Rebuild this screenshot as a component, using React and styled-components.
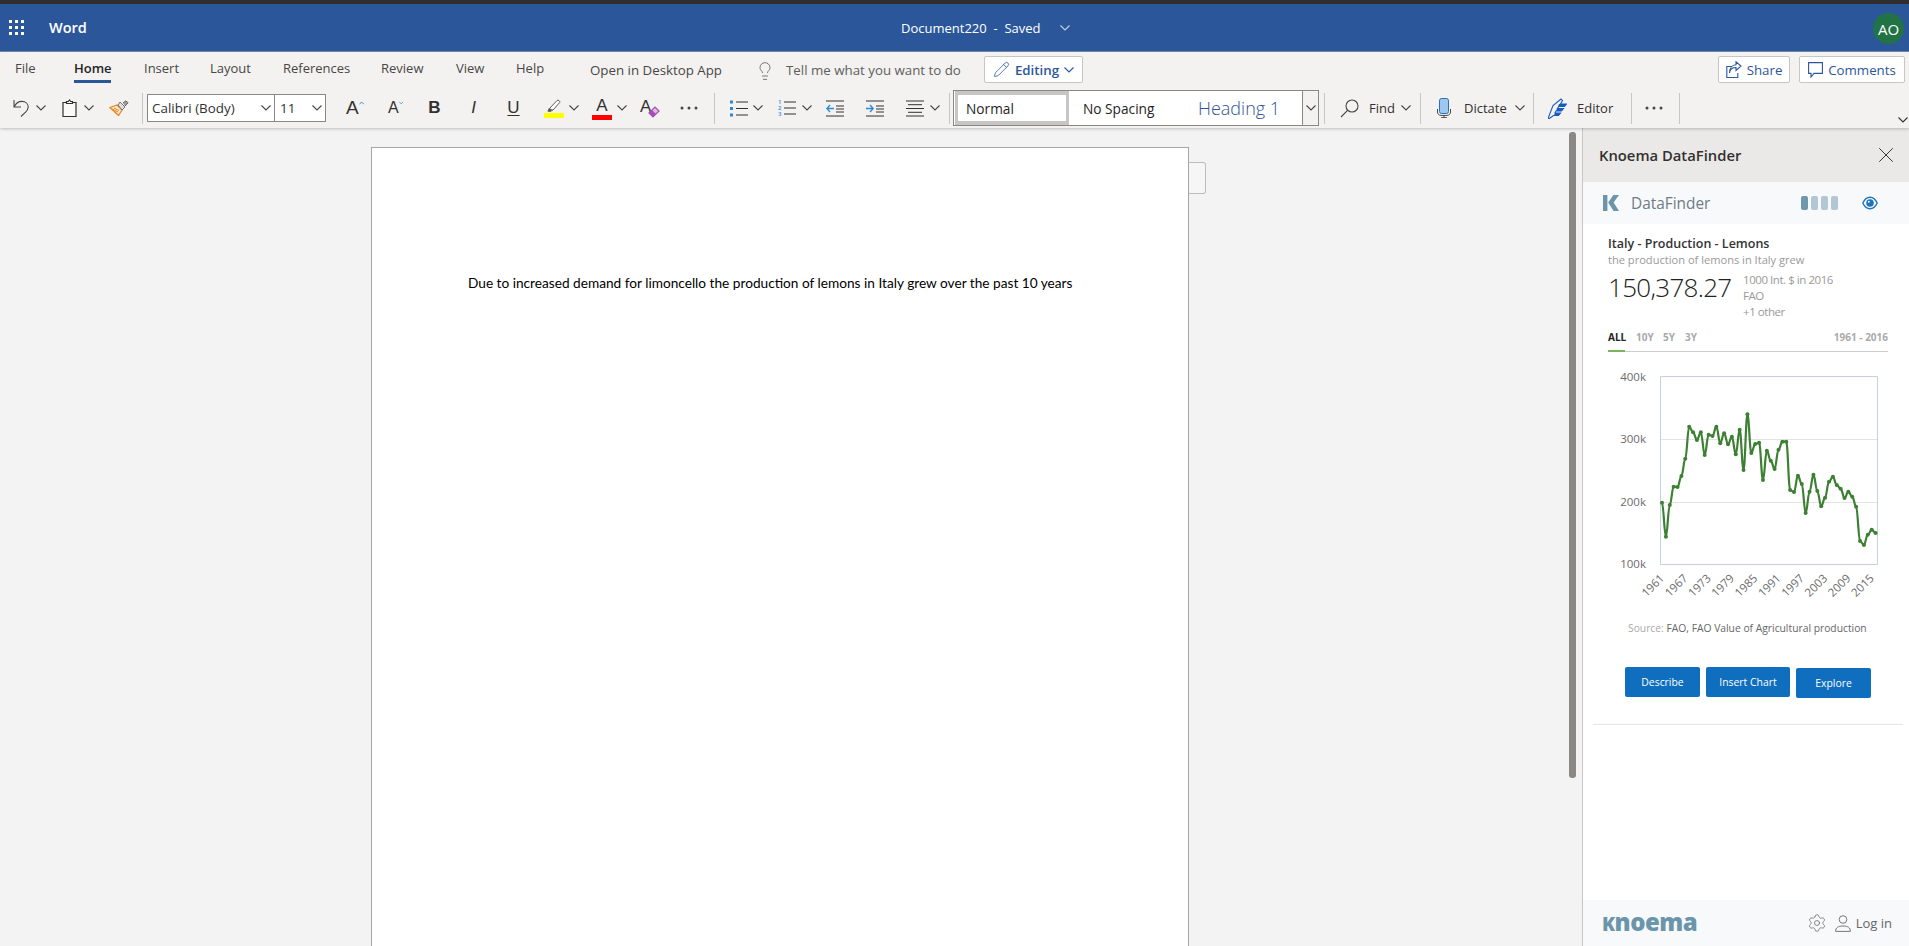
import React from 'react';
import styled, { createGlobalStyle } from 'styled-components';
import { Lightbulb, Pencil, Settings, X } from 'lucide-react';

const UI_FONT = '"Open Sans", "Noto Sans", sans-serif';

const GlobalStyle = createGlobalStyle`
  html, body {
    margin: 0;
    padding: 0;
    background: #f3f3f3;
    font-family: ${UI_FONT};
  }
  * {
    box-sizing: border-box;
  }
`;

const Root = styled.div`
  width: 1909px;
  height: 946px;
  overflow: hidden;
  display: flex;
  flex-direction: column;
`;

const TitleBar = styled.header`
  height: 52px;
  flex: none;
  display: flex;
  align-items: center;
  background: #2b579a;
  border-top: 4px solid #2e2e2e;
  border-bottom: 1px solid #6f8cb8;
  color: #fff;
`;

const Waffle = styled.svg`
  width: 16px;
  height: 16px;
  margin-left: 9px;
  flex: none;
`;

const AppName = styled.div`
  width: 852px;
  margin-left: 24px;
  font-size: 14.5px;
  font-weight: 600;
`;

const DocName = styled.div`
  font-size: 13px;
  white-space: pre;
`;

const DocChevron = styled.span`
  display: inline-flex;
  margin-left: 20px;
`;

const Avatar = styled.div`
  width: 31px;
  height: 31px;
  margin: 2px 5px 0 auto;
  border-radius: 50%;
  background: #217346;
  display: flex;
  align-items: center;
  justify-content: center;
  font-size: 15px;
`;

const Ribbon = styled.div`
  height: 76px;
  flex: none;
  position: relative;
  z-index: 2;
  background: #f3f2f1;
  box-shadow: 0 1px 3px rgba(0, 0, 0, 0.22);
`;

const TabRow = styled.div`
  height: 40px;
  display: flex;
  align-items: flex-start;
  padding: 4px 4px 0 15px;
`;

const Tab = styled.div`
  position: relative;
  width: ${(p) => p.$w}px;
  flex: none;
  height: 24px;
  line-height: 24px;
  font-size: 13px;
  color: ${(p) => (p.$active ? '#252423' : '#484644')};
  font-weight: ${(p) => (p.$active ? 600 : 400)};
  &::after {
    content: ${(p) => (p.$active ? '""' : 'none')};
    position: absolute;
    left: 0;
    top: 24px;
    width: 37px;
    height: 3px;
    background: #2b579a;
  }
`;

const RibbonLink = styled.div`
  width: ${(p) => p.$w}px;
  flex: none;
  margin-top: 2px;
  height: 24px;
  line-height: 24px;
  font-size: 13.3px;
  color: #484644;
  white-space: nowrap;
`;

const TellMe = styled(RibbonLink)`
  width: 198px;
  color: #605e5c;
`;

const BulbWrap = styled.span`
  display: inline-flex;
  width: 31px;
  flex: none;
  margin: 5px 0 0 -3px;
  color: #605e5c;
`;

const OutlineButton = styled.div`
  height: 27px;
  width: ${(p) => p.$w}px;
  flex: none;
  margin-left: ${(p) => p.$ml || 0}px;
  display: flex;
  align-items: center;
  justify-content: center;
  gap: 5px;
  background: #fff;
  border: 1px solid #c8c6c4;
  border-radius: 2px;
  color: #2b579a;
  font-size: 13.3px;
  font-weight: ${(p) => (p.$bold ? 600 : 500)};
  white-space: nowrap;
`;

const ToolRow = styled.div`
  height: 32px;
  display: flex;
  align-items: center;
`;

const Slot = styled.span`
  display: inline-flex;
  align-items: center;
  justify-content: center;
  flex: none;
  width: ${(p) => p.$w}px;
  margin-left: ${(p) => p.$ml || 0}px;
  color: #323130;
`;

const Sep = styled.span`
  flex: none;
  width: 1px;
  height: 31px;
  margin-left: ${(p) => p.$ml || 0}px;
  background: #c8c6c4;
`;

const FontBox = styled.div`
  width: 179px;
  height: 28px;
  flex: none;
  margin-left: 4px;
  display: flex;
  background: #fff;
  border: 1px solid #8a8886;
`;

const FontField = styled.div`
  width: ${(p) => p.$w}px;
  padding: 0 3px 0 ${(p) => p.$pad}px;
  display: flex;
  align-items: center;
  justify-content: space-between;
  border-right: ${(p) => (p.$divided ? '1px solid #8a8886' : 'none')};
  font-size: 13.4px;
  color: #323130;
`;

const LetterTool = styled.span`
  display: inline-flex;
  justify-content: center;
  flex: none;
  width: ${(p) => p.$w}px;
  margin-left: ${(p) => p.$ml || 0}px;
  font-family: "Liberation Sans", sans-serif;
  font-size: ${(p) => p.$size || 17}px;
  font-weight: ${(p) => (p.$bold ? 700 : 400)};
  font-style: ${(p) => (p.$italic ? 'italic' : 'normal')};
  text-decoration: ${(p) => (p.$under ? 'underline' : 'none')};
  text-underline-offset: 2px;
  color: #323130;
  line-height: 20px;
`;

const ColorLetter = styled.span`
  display: inline-flex;
  flex-direction: column;
  align-items: center;
  width: 20px;
  flex: none;
  margin-left: ${(p) => p.$ml || 0}px;
  font-family: "Liberation Sans", sans-serif;
  font-size: 17px;
  line-height: 19px;
  color: #323130;
  &::after {
    content: '';
    width: 20px;
    height: 5px;
    background: ${(p) => p.$bar};
  }
`;

const ToolLabel = styled.span`
  flex: none;
  width: ${(p) => p.$w}px;
  margin-left: ${(p) => p.$ml || 0}px;
  font-size: 13px;
  color: #323130;
  white-space: nowrap;
`;

const Gallery = styled.div`
  width: 366px;
  height: 36px;
  flex: none;
  margin-left: 3px;
  display: flex;
  padding: 0 0 0 1px;
  background: #fff;
  border: 1px solid #8a8886;
  white-space: nowrap;
`;

const StyleCell = styled.div`
  display: flex;
  align-items: center;
  width: ${(p) => p.$w}px;
  flex: none;
  padding-left: ${(p) => p.$pad}px;
  font-size: ${(p) => p.$size || 13.7}px;
  font-weight: ${(p) => p.$weight || 400};
  color: ${(p) => p.$color || '#252423'};
  border-style: solid;
  border-color: #c8c6c4;
  border-width: ${(p) => (p.$selected ? '4px 3px' : '0')};
`;

const GalleryMore = styled.div`
  width: 16px;
  margin-left: auto;
  display: flex;
  align-items: center;
  justify-content: center;
  background: #f3f2f1;
  border-left: 1px solid #8a8886;
`;

const CollapseChevron = styled.span`
  display: inline-flex;
  margin: 24px 1px 0 auto;
`;

const Workspace = styled.div`
  flex: 1;
  min-height: 0;
  display: flex;
`;

const Canvas = styled.main`
  flex: 1;
  display: flex;
  align-items: flex-start;
  padding: 19px 0 0 371px;
  background: #f3f3f3;
  overflow: hidden;
`;

const Page = styled.div`
  width: 818px;
  height: 800px;
  flex: none;
  background: #fff;
  border: 1px solid #a6a6a6;
  padding: 125px 0 0 96px;
  font-family: Lato, sans-serif;
  font-size: 13.67px;
  line-height: 20px;
  color: #000;
`;

const CommentStub = styled.div`
  width: 17px;
  height: 32px;
  flex: none;
  margin-top: 15px;
  background: #f6f6f6;
  border: 1px solid #bdbdbd;
  border-left: none;
  border-radius: 0 3px 3px 0;
`;

const ScrollTrack = styled.div`
  width: 7px;
  flex: none;
  margin-right: 6px;
  padding-top: 4px;
  background: #f3f3f3;
`;

const ScrollThumb = styled.div`
  height: 646px;
  background: #8a8886;
  border-radius: 3px;
`;

const Pane = styled.aside`
  width: 327px;
  flex: none;
  display: flex;
  flex-direction: column;
  background: #fff;
  border-left: 1px solid #c8c6c4;
`;

const PaneHeader = styled.div`
  height: 54px;
  flex: none;
  display: flex;
  align-items: center;
  justify-content: space-between;
  padding: 0 10px 0 16px;
  background: #ebe9e7;
  font-size: 14.8px;
  font-weight: 600;
  color: #323130;
`;

const FinderBar = styled.div`
  height: 42px;
  flex: none;
  display: flex;
  align-items: center;
  padding: 0 31px 0 20px;
  background: #f7f9fb;
`;

const FinderName = styled.div`
  margin-left: 12px;
  font-size: 15.4px;
  color: #6f7c85;
`;

const Levels = styled.div`
  display: flex;
  gap: 3px;
  margin: 0 24px 0 auto;
`;

const Level = styled.span`
  width: 7px;
  height: 14px;
  border-radius: 2px;
  background: ${(p) => (p.$on ? '#6f98ae' : '#b2c6d4')};
`;

const Card = styled.div`
  padding: 12px 21px 0 25px;
`;

const CardTitle = styled.div`
  font-size: 12.5px;
  line-height: 16px;
  font-weight: 600;
  color: #333;
`;

const CardSub = styled.div`
  font-size: 11.1px;
  line-height: 16px;
  color: #999;
`;

const ValueRow = styled.div`
  display: flex;
  align-items: flex-start;
  height: 52px;
`;

const Value = styled.div`
  width: 135px;
  flex: none;
  font-size: 26px;
  font-weight: 300;
  line-height: 38px;
  letter-spacing: -0.7px;
  color: #222;
`;

const ValueInfo = styled.div`
  margin-top: 4px;
  font-size: 11.5px;
  line-height: 16px;
  color: #999;
  letter-spacing: -0.45px;
`;

const RangeRow = styled.div`
  position: relative;
  margin-top: 9px;
  padding-bottom: 6px;
  display: flex;
  border-bottom: 1px solid #ccc;
  font-size: 10px;
  line-height: 16px;
  font-weight: 700;
  color: #aaa;
  &::after {
    content: '';
    position: absolute;
    left: 0;
    bottom: -1px;
    width: 17px;
    height: 2px;
    background: #7ab55c;
  }
`;

const RangeItem = styled.span`
  width: ${(p) => p.$w}px;
  color: ${(p) => (p.$active ? '#222' : '#aaa')};
`;

const RangeSpan = styled.span`
  margin-left: auto;
`;

const Chart = styled.svg`
  display: block;
  width: 276px;
  height: 240px;
  margin: 13px 0 0 4px;
`;

const SourceLine = styled.div`
  margin-top: 15px;
  padding-left: 20px;
  font-size: 10.3px;
  line-height: 16px;
  color: #666;
  white-space: nowrap;
`;

const SourceKey = styled.span`
  color: #aaa;
`;

const Actions = styled.div`
  display: flex;
  align-items: flex-start;
  gap: 6px;
  margin: 31px 0 0 42px;
`;

const ActionButton = styled.div`
  width: ${(p) => p.$w}px;
  height: 30px;
  margin-top: ${(p) => p.$drop || 0}px;
  display: flex;
  align-items: center;
  justify-content: center;
  background: #106ebe;
  border-radius: 2px;
  color: #fff;
  font-size: 10.4px;
`;

const CardRule = styled.div`
  height: 1px;
  margin: 26px 6px 0 10px;
  background: #e5e5e5;
`;

const PaneFooter = styled.div`
  height: 46px;
  flex: none;
  margin-top: auto;
  display: flex;
  align-items: center;
  padding: 0 17px 0 20px;
  background: #f7f9fb;
  color: #666;
`;

const Wordmark = styled.div`
  font-size: 24px;
  line-height: 28px;
  font-weight: 800;
  color: #6b95aa;
  letter-spacing: -0.5px;
  margin-left: -1px;
  &::first-letter {
    font-size: 19px;
    text-transform: uppercase;
  }
`;

const LogIn = styled.div`
  margin-left: 5px;
  font-size: 13px;
  color: #666;
`;

const GearWrap = styled.span`
  display: inline-flex;
  margin: 0 8px 0 auto;
`;

const Chevron = ({ color = '#484644' }) => (
  <svg width="10" height="6" viewBox="0 0 10 6" fill="none" stroke={color} strokeWidth="1.1">
    <path d="M.5.5 5 5 9.5.5" />
  </svg>
);

const Dots = () => (
  <svg width="18" height="4" viewBox="0 0 18 4" fill="#484644">
    <circle cx="2" cy="2" r="1.5" />
    <circle cx="9" cy="2" r="1.5" />
    <circle cx="16" cy="2" r="1.5" />
  </svg>
);

const Undo = () => (
  <svg width="16" height="18" viewBox="0 0 16 18" fill="none" stroke="#484644" strokeWidth="1.1">
    <path d="M1 1v7h7M1.300 7.600C3.200 4 5.800 2.400 8.800 2.400c3.900 0 6.400 2.500 6.400 5.600 0 2.800-1.700 4.300-3.200 5.700L8 17.500" />
  </svg>
);

const Clipboard = () => (
  <svg width="15" height="18" viewBox="0 0 15 18" fill="#faf9f8" stroke="#323130" strokeWidth="1.2">
    <path d="M1 3.500h13v14H1z" />
    <path d="M4.500 3.500v-1h1.800L7.500 1l1.200 1.500h1.800v2h-6z" />
  </svg>
);

const Painter = () => (
  <svg width="20" height="16" viewBox="0 0 20 16" fill="none">
    <path d="M1 7.500 8 5l5 5-3.500 5.500z" fill="#fde7cd" stroke="#e8861d" strokeWidth="1.2" />
    <path d="M3 9l6 3M5 8l5 2.500M5.500 12 8 14" stroke="#e8861d" />
    <path d="m9 5 2-3 5 5-3 3z" fill="#e1dfdd" stroke="#7a7574" />
    <path d="M14 3 17 .8l2 2L16 6" fill="#a19f9d" stroke="#605e5c" />
  </svg>
);

const Caret = ({ up }) => (
  <svg width="6" height="4" viewBox="0 0 6 4" fill="none" stroke="#2b88d8" strokeWidth="1">
    <path d={up ? 'M.5 3.500 3 .8l2.500 2.700' : 'M.5.5 3 3.200 5.500.5'} />
  </svg>
);

const SizeTool = styled.span`
  display: inline-flex;
  align-items: flex-start;
  flex: none;
  width: ${(p) => p.$w}px;
  margin-left: ${(p) => p.$ml}px;
  font-family: "Liberation Sans", sans-serif;
  font-size: ${(p) => p.$size}px;
  line-height: 20px;
  color: #323130;
  & svg {
    margin-top: 3px;
  }
`;

const Highlight = () => (
  <svg width="20" height="19" viewBox="0 0 20 19">
    <path d="M4 12l2-3 7-7.500c1-1 3.400.4 2.700 2L9 11l-3 1.500z" fill="#fff" stroke="#605e5c" />
    <path d="M3.500 12.500 5 9l4 2-3 1.500z" fill="#605e5c" />
    <rect y="14" width="20" height="5" fill="#ffff00" />
  </svg>
);

const ClearFormat = () => (
  <svg width="20" height="20" viewBox="0 0 20 20">
    <text x="0" y="14" fontFamily="Liberation Sans, sans-serif" fontSize="17" fill="#323130">A</text>
    <path d="m9 15 6-6 4 4-6 6z" fill="#e3b7ec" stroke="#a74fb5" strokeWidth="1.2" />
    <path d="m9 15 3-3 4 4-3 3z" fill="#a74fb5" />
  </svg>
);

const Bullets = () => (
  <svg width="18" height="17" viewBox="0 0 18 17" stroke="#323130">
    <path d="M6 2h12M6 8.500h12M6 15h12" />
    <path d="M0 .5h3v3H0zM0 7h3v3H0zM0 13.500h3v3H0z" fill="#2b88d8" stroke="none" />
  </svg>
);

const Numbers = () => (
  <svg width="18" height="18" viewBox="0 0 18 18" stroke="#323130">
    <path d="M6 3h12M6 9h12M6 15h12" />
    <g fontFamily="Open Sans, sans-serif" fontSize="6" fontWeight="600" fill="#2b88d8" stroke="none">
      <text x="0" y="5">1</text>
      <text x="0" y="11">2</text>
      <text x="0" y="17">3</text>
    </g>
  </svg>
);

const Indent = ({ out }) => (
  <svg width="18" height="17" viewBox="0 0 18 17" fill="none" stroke="#323130">
    <path d="M0 1h18M0 16h18M10 6h8M10 9h8M10 12h8" />
    <path d={out ? 'M8 8.500H1M4 5 .8 8.500 4 12' : 'M0 8.500h7M4 5l3.200 3.500L4 12'} stroke="#2b88d8" strokeWidth="1.3" />
  </svg>
);

const Align = () => (
  <svg width="18" height="17" viewBox="0 0 18 17" stroke="#323130">
    <path d="M0 1h18M2 4.700h14M0 8.500h18M2 12.300h14M0 16h18" />
  </svg>
);

const Search = () => (
  <svg width="19" height="19" viewBox="0 0 19 19" fill="none" stroke="#484644" strokeWidth="1.1">
    <circle cx="12" cy="7" r="6" />
    <path d="M7.800 11.200 1 18" />
  </svg>
);

const Mic = () => (
  <svg width="14" height="20" viewBox="0 0 14 20" fill="none">
    <rect x="2.500" y=".5" width="9" height="15" rx="2" fill="#9cc8ef" stroke="#2b6fb8" />
    <path d="M.5 11v3c0 2 1.500 3.400 3.500 3.400h6c2 0 3.500-1.400 3.500-3.400v-3M7 17.500V20M4 19.700h6" stroke="#484644" />
  </svg>
);

const Feather = () => (
  <svg width="19" height="21" viewBox="0 0 19 21" fill="#185abd">
    <path d="M0 20.500 5 7.500 13 1l1.500 1.500L12.500 6h6l-2 2.500H10.800L9.500 10.500h6l-2 2.500H8l-1 2h5.500l-2 2.500H5.500L1 20.800z" fill="none" stroke="#185abd" strokeWidth="1.1" />
    <path d="M11 6h7.500l-2 2.500H10zM9 10.500h6.500l-2 2.500H8zM7 15h5.500l-2 2.500H6z" />
  </svg>
);

const ShareIcon = () => (
  <svg width="16" height="17" viewBox="0 0 16 17" fill="none" stroke="#2b579a" strokeWidth="1.1">
    <path d="M6 5.500H.8v11h11V12" />
    <path d="M3.500 12C4 8 6.500 6.500 10 6.500V9.500L15 5 10 .8v3C6 4 3.500 7.500 3.500 12z" />
  </svg>
);

const CommentIcon = () => (
  <svg width="15" height="16" viewBox="0 0 15 16" fill="none" stroke="#2b579a" strokeWidth="1.1">
    <path d="M.6.6h13.800v10.800H6L3 15v-3.600H.6z" />
  </svg>
);

const KMark = () => (
  <svg width="16" height="16" viewBox="0 0 16 16" fill="#6b95aa">
    <path d="M0 0h4.400v16H0zM5.200 7.400 10.400 0H16l-5.400 7.400L16 16h-5.400z" />
  </svg>
);

const Eye = () => (
  <svg width="16" height="14" viewBox="0 0 16 14" fill="none">
    <path d="M.8 7C2.600 3.200 5 1.200 8 1.200S13.400 3.200 15.200 7C13.400 10.800 11 12.800 8 12.800S2.600 10.800.8 7z" stroke="#1e73be" strokeWidth="1.4" />
    <circle cx="8" cy="7" r="3.800" fill="#1e73be" />
    <circle cx="6.800" cy="5.800" r="1" fill="#fff" />
  </svg>
);

const UserIcon = () => (
  <svg width="16" height="17" viewBox="0 0 16 17" fill="none" stroke="#777" strokeWidth="1">
    <circle cx="8" cy="4.500" r="3.800" />
    <path d="M.6 16.400c0-3.800 2.600-5.400 7.400-5.400s7.400 1.600 7.400 5.400z" />
  </svg>
);

const tabs = [
  ['File', 59],
  ['Home', 70, true],
  ['Insert', 66],
  ['Layout', 73],
  ['References', 98],
  ['Review', 75],
  ['View', 60],
  ['Help', 74],
];

const trace = [
  428, 530, 435, 380, 381, 348, 296, 200, 217, 240, 217, 285, 224, 228, 200, 250, 220, 253, 230, 283,
  209, 330, 163, 279, 252, 248, 360, 272, 302, 327, 269, 245, 245, 390, 396, 347, 372, 459, 395, 344,
  393, 439, 413, 365, 350, 375, 386, 414, 395, 410, 440, 543, 555, 524, 509, 519,
];
const chartPoints = trace.map((zy, i) => [50 + i * 3.883, zy / 3 - 5]);

// horizontal-tangent spline, the way the chart library draws its series
const splinePath = (pts) =>
  pts.reduce((d, [x, y], i) => {
    if (i === 0) return `M${x} ${y}`;
    const [px, py] = pts[i - 1];
    const dx = (x - px) * 0.4;
    return `${d}C${px + dx} ${py} ${x - dx} ${y} ${x} ${y}`;
  }, '');

const yLabels = [['400k', 12], ['300k', 74], ['200k', 137], ['100k', 199]];
const xLabels = ['1961', '1967', '1973', '1979', '1985', '1991', '1997', '2003', '2009', '2015'];

const LemonChart = () => (
  <Chart viewBox="0 0 276 240">
    <path d="M48.500 11.500h217v188h-217z" fill="#fff" stroke="#c5d0e0" />
    <path d="M49 74.500h216M49 137.500h216" stroke="#e3e3e3" />
    <path d={splinePath(chartPoints)} fill="none" stroke="#3d8033" strokeWidth="2.200" strokeLinejoin="round" />
    {chartPoints.map(([x, y]) => (
      <circle key={x} cx={x} cy={y} r="2" fill="#3d8033" />
    ))}
    <g fontFamily="Open Sans, sans-serif" fontSize="11.5" fill="#6b6b6b">
      {yLabels.map(([t, y]) => (
        <text key={t} x="34" y={y + 4} textAnchor="end">{t}</text>
      ))}
      {xLabels.map((t, i) => {
        const x = 53 + i * 23.3;
        return (
          <text key={t} x={x} y="214" textAnchor="end" transform={`rotate(-45 ${x} 214)`}>{t}</text>
        );
      })}
    </g>
  </Chart>
);

const App = () => (
  <Root>
    <GlobalStyle />
    <TitleBar>
      <Waffle viewBox="0 0 16 16" fill="#fff">
        {[0, 6, 12].map((y) => [0, 6, 12].map((x) => <rect key={`${x}-${y}`} x={x} y={y} width="3" height="3" />))}
      </Waffle>
      <AppName>Word</AppName>
      <DocName>Document220  -  Saved</DocName>
      <DocChevron><Chevron color="#c3d0e4" /></DocChevron>
      <Avatar>AO</Avatar>
    </TitleBar>

    <Ribbon>
      <TabRow>
        {tabs.map(([name, w, active]) => (
          <Tab key={name} $w={w} $active={active}>{name}</Tab>
        ))}
        <RibbonLink $w={168}>Open in Desktop App</RibbonLink>
        <BulbWrap><Lightbulb size={20} strokeWidth={1} /></BulbWrap>
        <TellMe>Tell me what you want to do</TellMe>
        <OutlineButton $w={99} $bold>
          <Pencil size={17} strokeWidth={1.1} />
          Editing
          <Chevron color="#2b579a" />
        </OutlineButton>
        <OutlineButton $w={72} $ml={635}>
          <ShareIcon />
          Share
        </OutlineButton>
        <OutlineButton $w={106} $ml={9}>
          <CommentIcon />
          Comments
        </OutlineButton>
      </TabRow>

      <ToolRow>
        <Slot $w={16} $ml={13}><Undo /></Slot>
        <Slot $w={10} $ml={7}><Chevron /></Slot>
        <Slot $w={15} $ml={16}><Clipboard /></Slot>
        <Slot $w={10} $ml={7}><Chevron /></Slot>
        <Slot $w={20} $ml={15}><Painter /></Slot>
        <Sep $ml={13} />
        <FontBox>
          <FontField $w={127} $pad={4} $divided>Calibri (Body)<Chevron /></FontField>
          <FontField $w={50} $pad={5}>11<Chevron /></FontField>
        </FontBox>
        <SizeTool $w={18} $ml={20} $size={19}>A<Caret up /></SizeTool>
        <SizeTool $w={15} $ml={24} $size={16}>A<Caret /></SizeTool>
        <LetterTool $w={11} $ml={26} $bold $size={17}>B</LetterTool>
        <LetterTool $w={9} $ml={29} $italic $size={17}>I</LetterTool>
        <LetterTool $w={11} $ml={30} $under $size={17}>U</LetterTool>
        <Slot $w={20} $ml={25}><Highlight /></Slot>
        <Slot $w={10} $ml={5}><Chevron /></Slot>
        <ColorLetter $ml={13} $bar="#ff0000">A</ColorLetter>
        <Slot $w={10} $ml={5}><Chevron /></Slot>
        <Slot $w={20} $ml={13}><ClearFormat /></Slot>
        <Slot $w={18} $ml={20}><Dots /></Slot>
        <Sep $ml={16} />
        <Slot $w={18} $ml={15}><Bullets /></Slot>
        <Slot $w={10} $ml={5}><Chevron /></Slot>
        <Slot $w={18} $ml={15}><Numbers /></Slot>
        <Slot $w={10} $ml={6}><Chevron /></Slot>
        <Slot $w={18} $ml={14}><Indent out /></Slot>
        <Slot $w={18} $ml={22}><Indent /></Slot>
        <Slot $w={18} $ml={22}><Align /></Slot>
        <Slot $w={10} $ml={6}><Chevron /></Slot>
        <Sep $ml={9} />
        <Gallery>
          <StyleCell $w={114} $pad={8} $selected>Normal</StyleCell>
          <StyleCell $w={129} $pad={14}>No Spacing</StyleCell>
          <StyleCell $w={100} $pad={0} $size={18} $weight={300} $color="#2f5496">Heading 1</StyleCell>
          <GalleryMore><Chevron /></GalleryMore>
        </Gallery>
        <Sep $ml={5} />
        <Slot $w={19} $ml={15}><Search /></Slot>
        <ToolLabel $w={25} $ml={10}>Find</ToolLabel>
        <Slot $w={10} $ml={7}><Chevron /></Slot>
        <Sep $ml={9} />
        <Slot $w={14} $ml={16}><Mic /></Slot>
        <ToolLabel $w={43} $ml={13}>Dictate</ToolLabel>
        <Slot $w={10} $ml={8}><Chevron /></Slot>
        <Sep $ml={8} />
        <Slot $w={19} $ml={14}><Feather /></Slot>
        <ToolLabel $w={37} $ml={10}>Editor</ToolLabel>
        <Sep $ml={17} />
        <Slot $w={18} $ml={13}><Dots /></Slot>
        <Sep $ml={16} />
        <CollapseChevron><Chevron color="#323130" /></CollapseChevron>
      </ToolRow>
    </Ribbon>

    <Workspace>
      <Canvas>
        <Page>Due to increased demand for limoncello the production of lemons in Italy grew over the past 10 years</Page>
        <CommentStub />
      </Canvas>
      <ScrollTrack>
        <ScrollThumb />
      </ScrollTrack>
      <Pane>
        <PaneHeader>
          Knoema DataFinder
          <X size={26} strokeWidth={0.9} />
        </PaneHeader>
        <FinderBar>
          <KMark />
          <FinderName>DataFinder</FinderName>
          <Levels>
            <Level $on />
            <Level />
            <Level />
            <Level />
          </Levels>
          <Eye />
        </FinderBar>
        <Card>
          <CardTitle>Italy - Production - Lemons</CardTitle>
          <CardSub>the production of lemons in Italy grew</CardSub>
          <ValueRow>
            <Value>150,378.27</Value>
            <ValueInfo>
              1000 Int. $ in 2016
              <br />
              FAO
              <br />
              +1 other
            </ValueInfo>
          </ValueRow>
          <RangeRow>
            <RangeItem $w={28} $active>ALL</RangeItem>
            <RangeItem $w={27}>10Y</RangeItem>
            <RangeItem $w={22}>5Y</RangeItem>
            <RangeItem $w={22}>3Y</RangeItem>
            <RangeSpan>1961 - 2016</RangeSpan>
          </RangeRow>
          <LemonChart />
          <SourceLine>
            <SourceKey>Source: </SourceKey>
            FAO, FAO Value of Agricultural production
          </SourceLine>
        </Card>
        <Actions>
          <ActionButton $w={75}>Describe</ActionButton>
          <ActionButton $w={84}>Insert Chart</ActionButton>
          <ActionButton $w={75} $drop={1}>Explore</ActionButton>
        </Actions>
        <CardRule />
        <PaneFooter>
          <Wordmark>knoema</Wordmark>
          <GearWrap><Settings size={20} strokeWidth={0.9} color="#666" /></GearWrap>
          <UserIcon />
          <LogIn>Log in</LogIn>
        </PaneFooter>
      </Pane>
    </Workspace>
  </Root>
);

export default App;
